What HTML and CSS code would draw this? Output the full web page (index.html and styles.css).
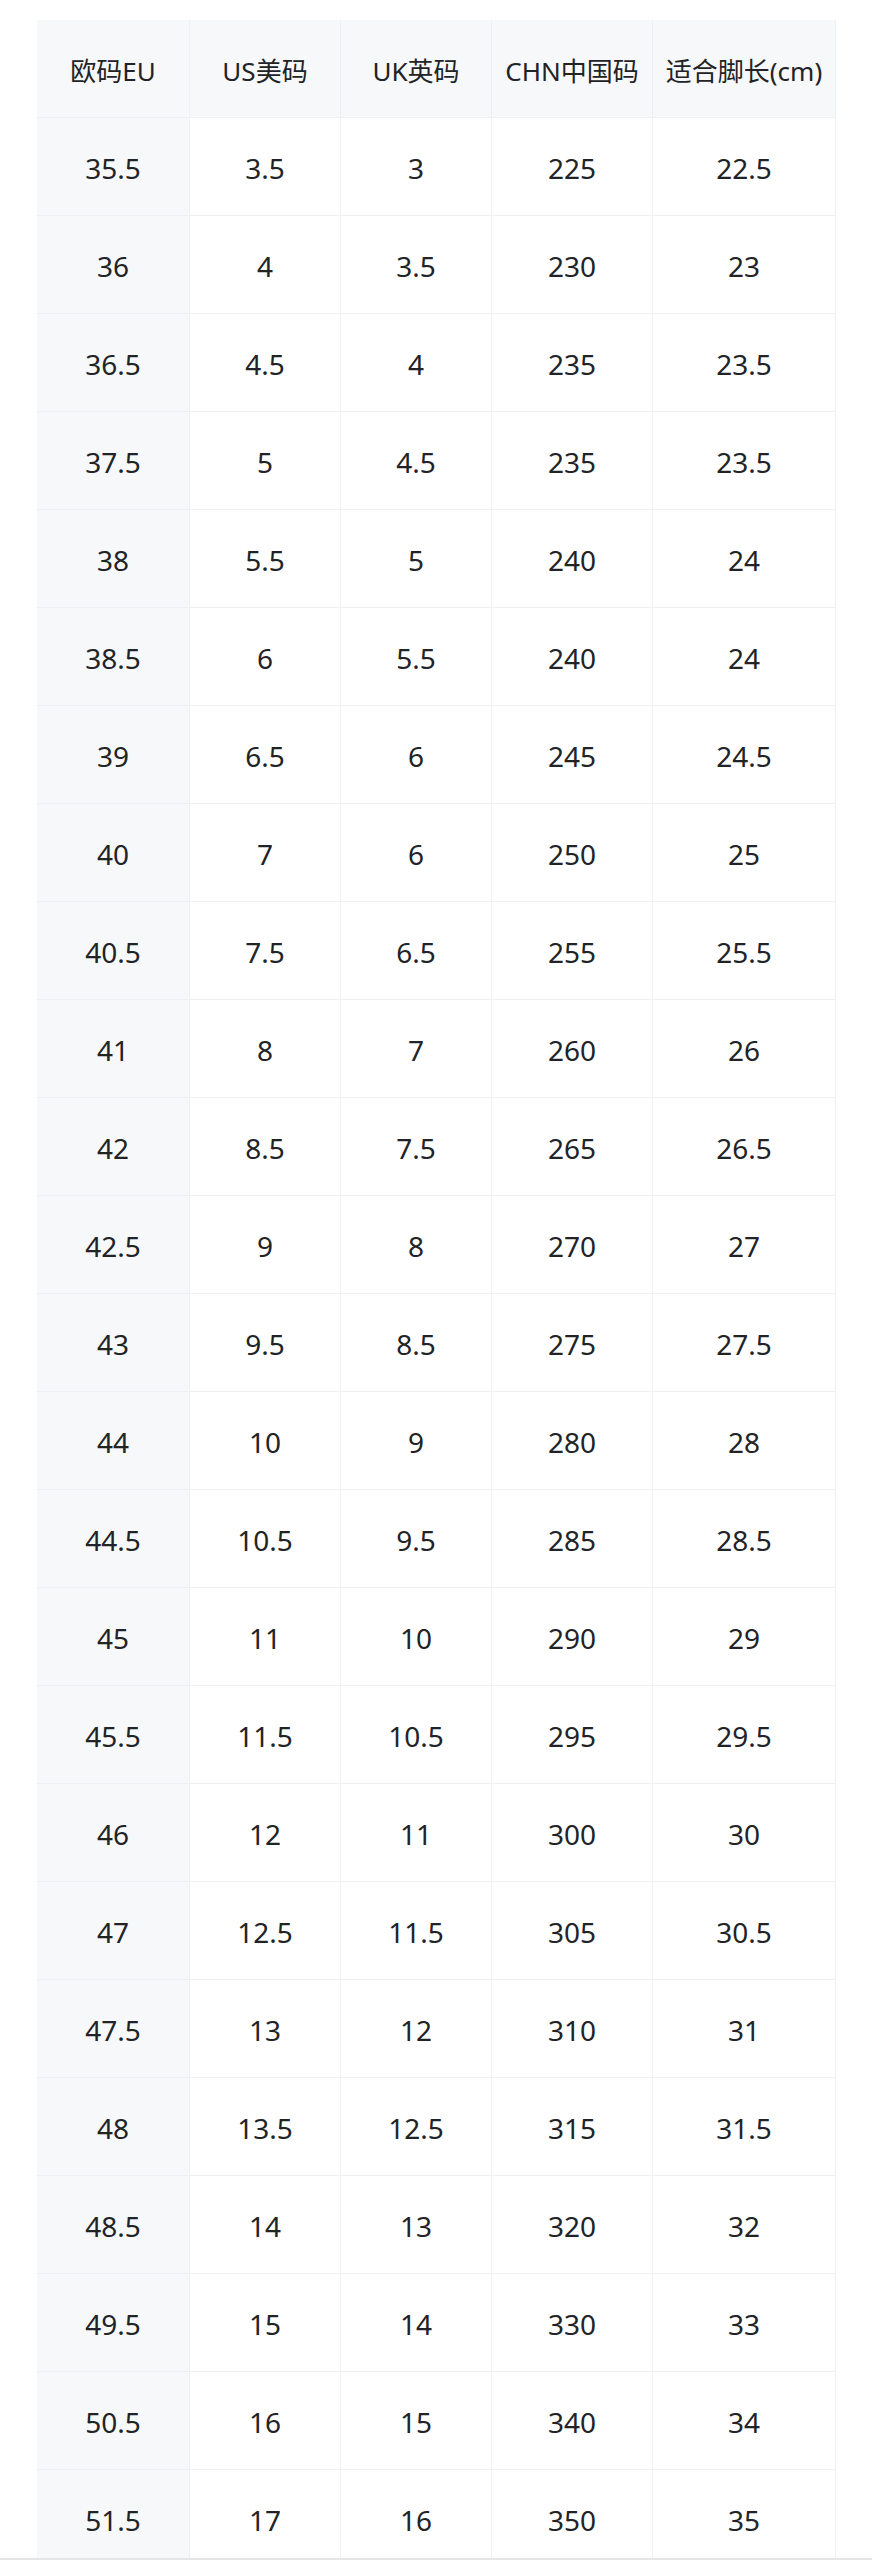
FILE: index.html
```html
<!DOCTYPE html>
<html lang="zh-CN">
<head>
<meta charset="utf-8">
<title>尺码对照表</title>
<link rel="stylesheet" href="styles.css">
</head>
<body>
<div class="page">
  <div class="size-table">
    <div class="row head">
      <div class="cell">欧码EU</div>
      <div class="cell">US美码</div>
      <div class="cell">UK英码</div>
      <div class="cell">CHN中国码</div>
      <div class="cell">适合脚长(cm)</div>
    </div>
    <div class="row"><div class="cell">35.5</div><div class="cell">3.5</div><div class="cell">3</div><div class="cell">225</div><div class="cell">22.5</div></div>
    <div class="row"><div class="cell">36</div><div class="cell">4</div><div class="cell">3.5</div><div class="cell">230</div><div class="cell">23</div></div>
    <div class="row"><div class="cell">36.5</div><div class="cell">4.5</div><div class="cell">4</div><div class="cell">235</div><div class="cell">23.5</div></div>
    <div class="row"><div class="cell">37.5</div><div class="cell">5</div><div class="cell">4.5</div><div class="cell">235</div><div class="cell">23.5</div></div>
    <div class="row"><div class="cell">38</div><div class="cell">5.5</div><div class="cell">5</div><div class="cell">240</div><div class="cell">24</div></div>
    <div class="row"><div class="cell">38.5</div><div class="cell">6</div><div class="cell">5.5</div><div class="cell">240</div><div class="cell">24</div></div>
    <div class="row"><div class="cell">39</div><div class="cell">6.5</div><div class="cell">6</div><div class="cell">245</div><div class="cell">24.5</div></div>
    <div class="row"><div class="cell">40</div><div class="cell">7</div><div class="cell">6</div><div class="cell">250</div><div class="cell">25</div></div>
    <div class="row"><div class="cell">40.5</div><div class="cell">7.5</div><div class="cell">6.5</div><div class="cell">255</div><div class="cell">25.5</div></div>
    <div class="row"><div class="cell">41</div><div class="cell">8</div><div class="cell">7</div><div class="cell">260</div><div class="cell">26</div></div>
    <div class="row"><div class="cell">42</div><div class="cell">8.5</div><div class="cell">7.5</div><div class="cell">265</div><div class="cell">26.5</div></div>
    <div class="row"><div class="cell">42.5</div><div class="cell">9</div><div class="cell">8</div><div class="cell">270</div><div class="cell">27</div></div>
    <div class="row"><div class="cell">43</div><div class="cell">9.5</div><div class="cell">8.5</div><div class="cell">275</div><div class="cell">27.5</div></div>
    <div class="row"><div class="cell">44</div><div class="cell">10</div><div class="cell">9</div><div class="cell">280</div><div class="cell">28</div></div>
    <div class="row"><div class="cell">44.5</div><div class="cell">10.5</div><div class="cell">9.5</div><div class="cell">285</div><div class="cell">28.5</div></div>
    <div class="row"><div class="cell">45</div><div class="cell">11</div><div class="cell">10</div><div class="cell">290</div><div class="cell">29</div></div>
    <div class="row"><div class="cell">45.5</div><div class="cell">11.5</div><div class="cell">10.5</div><div class="cell">295</div><div class="cell">29.5</div></div>
    <div class="row"><div class="cell">46</div><div class="cell">12</div><div class="cell">11</div><div class="cell">300</div><div class="cell">30</div></div>
    <div class="row"><div class="cell">47</div><div class="cell">12.5</div><div class="cell">11.5</div><div class="cell">305</div><div class="cell">30.5</div></div>
    <div class="row"><div class="cell">47.5</div><div class="cell">13</div><div class="cell">12</div><div class="cell">310</div><div class="cell">31</div></div>
    <div class="row"><div class="cell">48</div><div class="cell">13.5</div><div class="cell">12.5</div><div class="cell">315</div><div class="cell">31.5</div></div>
    <div class="row"><div class="cell">48.5</div><div class="cell">14</div><div class="cell">13</div><div class="cell">320</div><div class="cell">32</div></div>
    <div class="row"><div class="cell">49.5</div><div class="cell">15</div><div class="cell">14</div><div class="cell">330</div><div class="cell">33</div></div>
    <div class="row"><div class="cell">50.5</div><div class="cell">16</div><div class="cell">15</div><div class="cell">340</div><div class="cell">34</div></div>
    <div class="row"><div class="cell">51.5</div><div class="cell">17</div><div class="cell">16</div><div class="cell">350</div><div class="cell">35</div></div>
  </div>
</div>
<div class="bottom-edge"></div>
</body>
</html>
```

FILE: styles.css
```css
html, body {
  margin: 0;
  padding: 0;
  background: #ffffff;
}

body {
  font-family: "Noto Sans", "Noto Sans CJK SC", sans-serif;
  color: #222326;
}

.page {
  padding: 20px 36px 0 37px;
}

.size-table {
  width: 799px;
}

.row {
  display: grid;
  grid-template-columns: 153px 151px 151px 161px 183px;
  height: 98px;
  box-sizing: border-box;
  border-bottom: 1px solid #eff0f3;
}

.cell {
  display: flex;
  align-items: center;
  justify-content: center;
  box-sizing: border-box;
  border-right: 1px solid #eff0f3;
  font-size: 28px;
  padding-top: 3px;
  white-space: nowrap;
}

.cell:first-child {
  background: #f7f8fa;
}

.head {
  background: #f7f8fa;
}

.head .cell {
  font-size: 26px;
  padding-top: 2px;
}

.bottom-edge {
  position: fixed;
  left: 0;
  right: 0;
  bottom: 0;
  height: 2px;
  background: #e4e5e7;
}
```
